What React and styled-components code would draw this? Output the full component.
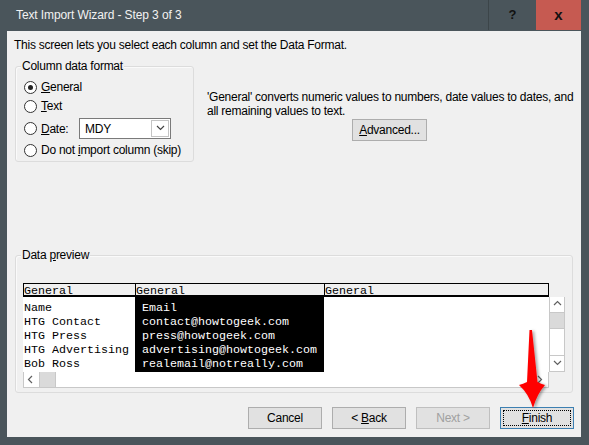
import React from "react";
import styled, { createGlobalStyle } from "styled-components";

const GlobalStyle = createGlobalStyle`
  html, body {
    margin: 0;
    padding: 0;
    background: #4a555b;
  }
  * {
    box-sizing: border-box;
  }
`;

const ui = `"Liberation Sans", Arial, sans-serif`;
const mono = `"Liberation Mono", "Courier New", monospace`;

const Window = styled.div`
  position: relative;
  width: 589px;
  height: 445px;
  background: #4a555b;
  display: flex;
  flex-direction: column;
  font-family: ${ui};
  font-size: 12px;
  color: #000;
  overflow: hidden;
`;

const TitleBar = styled.div`
  height: 30px;
  display: flex;
  align-items: stretch;
  margin-right: 8px;
`;

const Title = styled.div`
  flex: 1;
  padding-left: 16px;
  display: flex;
  align-items: center;
  color: #f2f2f2;
  font-size: 12px;
  letter-spacing: -0.1px;
`;

const CaptionButton = styled.div`
  width: ${(p) => p.$w}px;
  display: flex;
  align-items: center;
  justify-content: center;
  background: ${(p) => (p.$close ? "#c65a51" : "transparent")};
  border-left: ${(p) => (p.$close ? "none" : "1px solid #3c4549")};
  font-weight: bold;
  font-size: ${(p) => (p.$close ? 15 : 13)}px;
  color: #111;
  padding-bottom: 2px;
`;

const Body = styled.div`
  margin: 1px 8px 8px 7px;
  height: 406px;
  background: #f0f0f0;
  display: flex;
  flex-direction: column;
  letter-spacing: -0.25px;
`;

const Intro = styled.div`
  margin-top: 7px;
  padding-left: 7px;
  line-height: 14px;
  height: 14px;
`;

const TopRow = styled.div`
  margin-top: 14px;
  display: flex;
  align-items: flex-start;
`;

const GroupBox = styled.div`
  position: relative;
  flex-shrink: 0;
  margin-left: 8px;
  width: ${(p) => p.$w}px;
  height: ${(p) => p.$h}px;
  border: 1px solid #dcdcdc;
  border-radius: 3px;
  box-shadow: inset 1px 1px 0 #fafafa;
  padding: ${(p) => p.$pad};
`;

const Legend = styled.span`
  position: absolute;
  left: 5px;
  top: -8px;
  padding: 0 1px;
  line-height: 14px;
  background: #f0f0f0;
`;

const OptionRow = styled.div`
  display: flex;
  align-items: center;
  height: ${(p) => p.$h || 14}px;
  margin-top: ${(p) => p.$mt || 0}px;
`;

const Radio = styled.span`
  width: 13px;
  height: 13px;
  border-radius: 50%;
  border: 1px solid #333;
  background: #fff;
  display: flex;
  align-items: center;
  justify-content: center;
  margin-right: 4px;
  flex-shrink: 0;

  &::after {
    content: "";
    display: ${(p) => (p.$checked ? "block" : "none")};
    width: 5px;
    height: 5px;
    border-radius: 50%;
    background: #222;
  }
`;

const OptionLabel = styled.span`
  width: ${(p) => (p.$w ? `${p.$w}px` : "auto")};
  white-space: nowrap;
  line-height: 14px;
`;

const Combo = styled.div`
  width: 92px;
  height: 21px;
  border: 1px solid #7a7a7a;
  background: #fff;
  display: flex;
  align-items: stretch;
`;

const ComboValue = styled.span`
  flex: 1;
  padding-left: 5px;
  display: flex;
  align-items: center;
`;

const ComboButton = styled.span`
  width: 18px;
  margin: 1px;
  border: 1px solid #c4c4c4;
  display: flex;
  align-items: center;
  justify-content: center;
`;

const Description = styled.div`
  margin-left: 13px;
  margin-top: 24px;
  display: flex;
  flex-direction: column;
`;

const DescText = styled.div`
  line-height: 14px;
  white-space: nowrap;
`;

const Button = styled.div`
  width: ${(p) => p.$w || 74}px;
  height: 22px;
  margin-left: ${(p) => p.$ml || 0}px;
  margin-top: ${(p) => p.$mt || 0}px;
  display: flex;
  align-items: center;
  justify-content: center;
  position: relative;
  background: #e1e1e1;
  border: 1px solid ${(p) => (p.$focus ? "#3c7fb1" : p.$disabled ? "#bfbfbf" : "#adadad")};
  color: ${(p) => (p.$disabled ? "#a0a0a0" : "#000")};
  padding-bottom: 1px;

  &::after {
    content: "";
    display: ${(p) => (p.$focus ? "block" : "none")};
    position: absolute;
    inset: 2px;
    border: 1px dotted #000;
  }
`;

const PreviewGroup = styled(GroupBox)`
  margin-top: 93px;
`;

const Preview = styled.div`
  display: grid;
  grid-template-columns: 526px 16px;
  grid-template-rows: 14px 75px 16px;
  letter-spacing: 0;
`;

const HeaderRow = styled.div`
  display: flex;
  border: 1px solid #000;
  border-bottom: 2px solid #000;
  background: #f0f0f0;
`;

const HeaderCell = styled.div`
  width: ${(p) => (p.$w ? `${p.$w}px` : "auto")};
  flex: ${(p) => (p.$w ? "none" : 1)};
  border-left: ${(p) => (p.$first ? "none" : "1px solid #000")};
  font-family: ${mono};
  font-size: 11.67px;
  line-height: 13px;
  height: 11px;
  padding-top: 1px;
`;

const CornerBlank = styled.div``;

const DataArea = styled.div`
  display: flex;
  background: #fff;
  overflow: hidden;
`;

const DataColumn = styled.div`
  width: ${(p) => (p.$w ? `${p.$w}px` : "auto")};
  flex: ${(p) => (p.$w ? "none" : 1)};
  background: ${(p) => (p.$selected ? "#000" : "#fff")};
  color: ${(p) => (p.$selected ? "#fff" : "#000")};
  padding: 4px 0 0 ${(p) => p.$pl || 0}px;
  font-family: ${mono};
  font-size: 11.67px;
  line-height: 14px;
  white-space: pre;
  overflow: hidden;
`;

const VScroll = styled.div`
  display: flex;
  flex-direction: column;
  background: #fff;
  border: 1px solid #c8c8c8;
  border-top: none;
`;

const ScrollBox = styled.div`
  width: ${(p) => (p.$horizontal ? "16px" : "auto")};
  height: ${(p) => (p.$horizontal ? "auto" : "16px")};
  background: ${(p) => (p.$thumb ? "#dadada" : "#fff")};
  border-${(p) => (p.$horizontal ? "right" : "bottom")}: 1px solid #c8c8c8;
  display: flex;
  align-items: center;
  justify-content: center;
  flex-shrink: 0;
`;

const ScrollTrack = styled.div`
  flex: 1;
`;

const HScroll = styled.div`
  display: flex;
  background: #fff;
  border: 1px solid #c8c8c8;
  border-top: none;
`;

const ScrollEnd = styled(ScrollBox)`
  border-right: none;
  border-bottom: none;
  border-${(p) => (p.$horizontal ? "left" : "top")}: 1px solid #c8c8c8;
`;

const ButtonRow = styled.div`
  margin-top: 14px;
  padding-right: 7px;
  display: flex;
  justify-content: flex-end;
  gap: 10px;
`;

const ArrowOverlay = styled.svg`
  position: absolute;
  left: 510px;
  top: 325px;
  pointer-events: none;
`;

const Chevron = ({ dir, color = "#606060" }) => {
  const pts = {
    up: "1,5 4.5,1.5 8,5",
    down: "1,2 4.5,5.5 8,2",
    left: "5,1 1.5,4.5 5,8",
    right: "2,1 5.5,4.5 2,8",
  }[dir];
  return (
    <svg width="9" height="9" viewBox="0 0 9 9">
      <polyline points={pts} fill="none" stroke={color} strokeWidth="1.2" />
    </svg>
  );
};

const col1 = ["Name", "HTG Contact", "HTG Press", "HTG Advertising", "Bob Ross"];
const col2 = [
  "Email",
  "contact@howtogeek.com",
  "press@howtogeek.com",
  "advertising@howtogeek.com",
  "realemail@notreally.com",
];

export default function App() {
  return (
    <>
      <GlobalStyle />
      <Window>
        <TitleBar>
          <Title>Text Import Wizard - Step 3 of 3</Title>
          <CaptionButton $w={48}>?</CaptionButton>
          <CaptionButton $w={45} $close>
            x
          </CaptionButton>
        </TitleBar>
        <Body>
          <Intro>This screen lets you select each column and set the Data Format.</Intro>
          <TopRow>
            <GroupBox $w={179} $h={96} $pad="13px 0 0 8px">
              <Legend>Column data format</Legend>
              <OptionRow>
                <Radio $checked />
                <OptionLabel>
                  <u>G</u>eneral
                </OptionLabel>
              </OptionRow>
              <OptionRow $mt={5}>
                <Radio />
                <OptionLabel>
                  <u>T</u>ext
                </OptionLabel>
              </OptionRow>
              <OptionRow $mt={5} $h={21}>
                <Radio />
                <OptionLabel $w={38}>
                  <u>D</u>ate:
                </OptionLabel>
                <Combo>
                  <ComboValue>MDY</ComboValue>
                  <ComboButton>
                    <Chevron dir="down" color="#444" />
                  </ComboButton>
                </Combo>
              </OptionRow>
              <OptionRow $mt={4}>
                <Radio />
                <OptionLabel>
                  Do not <u>i</u>mport column (skip)
                </OptionLabel>
              </OptionRow>
            </GroupBox>
            <Description>
              <DescText>'General' converts numeric values to numbers, date values to dates, and</DescText>
              <DescText>all remaining values to text.</DescText>
              <Button $w={75} $ml={145} $mt={1}>
                <span>
                  <u>A</u>dvanced...
                </span>
              </Button>
            </Description>
          </TopRow>
          <PreviewGroup $w={558} $h={138} $pad="27px 0 0 7px">
            <Legend>
              Data <u>p</u>review
            </Legend>
            <Preview>
              <HeaderRow>
                <HeaderCell $w={111} $first>
                  General
                </HeaderCell>
                <HeaderCell $w={189}>General</HeaderCell>
                <HeaderCell>General</HeaderCell>
              </HeaderRow>
              <CornerBlank />
              <DataArea>
                <DataColumn $w={112} $pl={1}>
                  {col1.join("\n")}
                </DataColumn>
                <DataColumn $w={189} $pl={7} $selected>
                  {col2.join("\n")}
                </DataColumn>
                <DataColumn />
              </DataArea>
              <VScroll>
                <ScrollBox>
                  <Chevron dir="up" />
                </ScrollBox>
                <ScrollBox $thumb />
                <ScrollTrack />
                <ScrollEnd>
                  <Chevron dir="down" />
                </ScrollEnd>
              </VScroll>
              <HScroll>
                <ScrollBox $horizontal>
                  <Chevron dir="left" />
                </ScrollBox>
                <ScrollBox $horizontal $thumb />
                <ScrollTrack />
                <ScrollEnd $horizontal>
                  <Chevron dir="right" />
                </ScrollEnd>
              </HScroll>
              <CornerBlank />
            </Preview>
          </PreviewGroup>
          <ButtonRow>
            <Button>Cancel</Button>
            <Button>
              <span>
                &lt; <u>B</u>ack
              </span>
            </Button>
            <Button $disabled>Next &gt;</Button>
            <Button $focus>
              <span>
                <u>F</u>inish
              </span>
            </Button>
          </ButtonRow>
        </Body>
        <ArrowOverlay width="45" height="90" viewBox="510 325 45 90">
          <defs>
            <filter id="shadow" x="-50%" y="-20%" width="200%" height="150%">
              <feDropShadow dx="2" dy="1" stdDeviation="1.5" floodColor="#000" floodOpacity="0.35" />
            </filter>
          </defs>
          <path
            d="M529.5,330 L532,330 L537.5,382 Q541,384 545,385 Q537,394 533,408 Q529,394 519,385 Q523,384 527,382 Z"
            fill="#ff0000"
            filter="url(#shadow)"
          />
        </ArrowOverlay>
      </Window>
    </>
  );
}
